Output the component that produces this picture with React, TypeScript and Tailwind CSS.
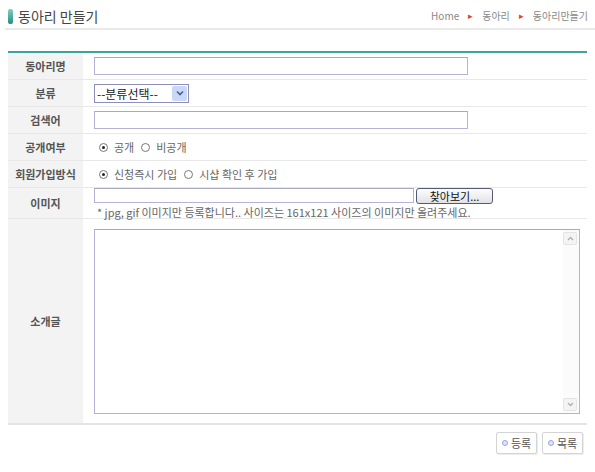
import React from "react";

const font = { fontFamily: '"Noto Sans CJK KR", "Noto Sans", sans-serif' };

function Radio({ checked }: { checked?: boolean }) {
  return (
    <span className="inline-flex h-[9px] w-[9px] items-center justify-center rounded-full border border-[#777] bg-white">
      {checked ? <span className="h-[3px] w-[3px] rounded-full bg-[#222]" /> : null}
    </span>
  );
}

function Row({ label, h, children, last }: { label: string; h: string; children?: React.ReactNode; last?: boolean }) {
  return (
    <div className={`flex ${h} ${last ? "border-b-2 border-[#e4e4e4]" : "border-b border-[#e8e8e8]"}`}>
      <div className="flex w-[75px] shrink-0 items-center justify-center bg-[#f3f3f3] text-[11px] font-bold text-[#555]">
        {label}
      </div>
      <div className="flex flex-1 flex-col justify-center pl-[11px]">{children}</div>
    </div>
  );
}

function Arrow() {
  return <span className="mx-[9px] text-[9px] text-[#e0442a]">▸</span>;
}

export default function App() {
  return (
    <div className="h-[472px] w-[595px] bg-white" style={font}>
      {/* header */}
      <div className="ml-[5px] flex h-[30px] items-start justify-between border-b-2 border-[#e9e9e9] pt-[7px]">
        <div className="flex items-center">
          <span className="ml-[3px] h-[15px] w-[5px] rounded-[2px] bg-gradient-to-b from-[#7fd0c6] to-[#1f8c82]" />
          <span className="ml-[5px] text-[14px] leading-[18px] text-[#444]">동아리 만들기</span>
        </div>
        <div className="mr-[7px] mt-[2px] flex items-center text-[10px] leading-[14px] text-[#888]">
          <span>Home</span>
          <Arrow />
          <span>동아리</span>
          <Arrow />
          <span>동아리만들기</span>
        </div>
      </div>

      {/* table */}
      <div className="mx-[8px] mt-[21px] border-t-2 border-[#3ea39a] text-[11px] text-[#555]">
        <Row label="동아리명" h="h-[27px]">
          <div className="h-[18px] w-[374px] border border-[#b4b2d8] border-t-[#a9a9b9] bg-white" />
        </Row>
        <Row label="분류" h="h-[27px]">
          <div className="flex h-[19px] w-[95px] items-center border border-[#8c8fb8] bg-white">
            <span className="flex-1 pl-[2px] text-[12px] leading-[17px] text-[#222]">--분류선택--</span>
            <span className="mr-[1px] flex h-[15px] w-[15px] items-center justify-center rounded-[2px] bg-[#c8d8f6]">
              <svg width="8" height="6" viewBox="0 0 8 6">
                <path d="M1 1.5 L4 4.5 L7 1.5" fill="none" stroke="#4d6185" strokeWidth="1.6" />
              </svg>
            </span>
          </div>
        </Row>
        <Row label="검색어" h="h-[27px]">
          <div className="h-[18px] w-[374px] border border-[#b4b2d8] border-t-[#a9a9b9] bg-white" />
        </Row>
        <Row label="공개여부" h="h-[27px]">
          <div className="flex items-center pl-[5px] text-[11px] text-[#666]">
            <Radio checked />
            <span className="ml-[6px]">공개</span>
            <span className="ml-[7px]"><Radio /></span>
            <span className="ml-[6px]">비공개</span>
          </div>
        </Row>
        <Row label="회원가입방식" h="h-[27px]">
          <div className="flex items-center pl-[5px] text-[11px] text-[#666]">
            <Radio checked />
            <span className="ml-[6px]">신청즉시 가입</span>
            <span className="ml-[7px]"><Radio /></span>
            <span className="ml-[6px]">시샵 확인 후 가입</span>
          </div>
        </Row>
        <Row label="이미지" h="h-[31px]">
          <div className="flex flex-col">
            <div className="flex items-center">
              <div className="h-[15px] w-[320px] border border-[#b4b2d8] border-t-[#a9a9b9] bg-white" />
              <div className="ml-[2px] flex h-[16px] w-[77px] items-center justify-center rounded-[3px] border border-[#555a70] bg-gradient-to-b from-[#fdfdfd] to-[#e2e2e6] text-[11px] leading-[14px] text-[#111]">
                찾아보기...
              </div>
            </div>
            <div className="mt-[1px] whitespace-nowrap pl-[3px] text-[11px] leading-[14px] text-[#666]">
              * jpg, gif 이미지만 등록합니다.. 사이즈는 161x121 사이즈의 이미지만 올려주세요.
            </div>
          </div>
        </Row>
        <Row label="소개글" h="h-[206px]" last>
          <div className="flex h-[185px] w-[486px] border border-[#b4b2d8] border-t-[#a9a9b9] bg-white">
            <div className="flex-1" />
            <div className="flex w-[16px] flex-col justify-between bg-[#fbfbfb] py-[2px] pr-[1px]">
              <div className="flex h-[13px] w-[14px] items-center justify-center rounded-[2px] border border-[#e4e4e4] bg-[#f4f4f4]">
                <svg width="7" height="5" viewBox="0 0 7 5">
                  <path d="M1 4 L3.5 1.5 L6 4" fill="none" stroke="#b0b0b0" strokeWidth="1.3" />
                </svg>
              </div>
              <div className="flex h-[13px] w-[14px] items-center justify-center rounded-[2px] border border-[#e4e4e4] bg-[#f4f4f4]">
                <svg width="7" height="5" viewBox="0 0 7 5">
                  <path d="M1 1 L3.5 3.5 L6 1" fill="none" stroke="#b0b0b0" strokeWidth="1.3" />
                </svg>
              </div>
            </div>
          </div>
        </Row>
      </div>

      {/* buttons */}
      <div className="mr-[12px] mt-[7px] flex justify-end gap-[5px]">
        {["등록", "목록"].map((t) => (
          <div
            key={t}
            className="flex h-[22px] w-[41px] items-center justify-center rounded-[2px] border border-[#d4d4d4] bg-white text-[11px] text-[#555] shadow-[1px_1px_0_#eee]"
          >
            <span className="mr-[3px] inline-block h-[6px] w-[6px] rounded-full border border-[#9aa3e0] bg-[#dfe3fb]" />
            {t}
          </div>
        ))}
      </div>
    </div>
  );
}
